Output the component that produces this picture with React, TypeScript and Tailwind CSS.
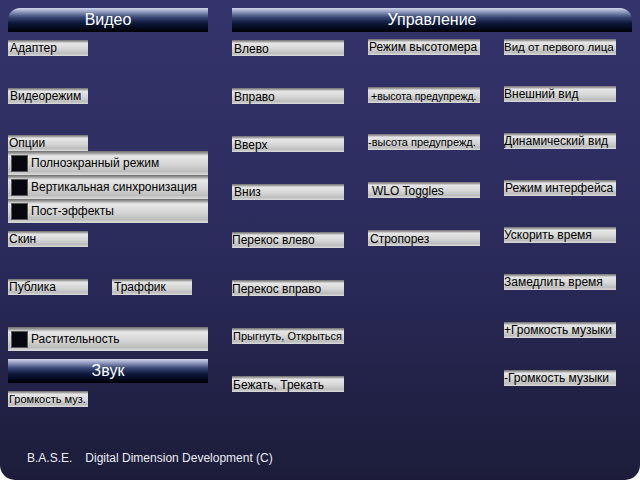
import React from "react";

type Key = {
  label: string;
  x?: string; // left padding class
  y?: string; // vertical offset class
  size?: string;
};

const font = { fontFamily: '"Liberation Sans", Arial, sans-serif' };

const btnBg =
  "bg-[linear-gradient(to_bottom,#6e6e6e_0%,#8c8c8c_6%,#e6e6e6_20%,#d6d6d6_55%,#bdbdbd_85%,#dcdcdc_100%)]";

const headerBg =
  "bg-[linear-gradient(to_bottom,#d0d6ea_0%,#9aa2c6_14%,#3a4876_38%,#0d1a3c_62%,#020616_88%,#000_100%)]";

function KeyButton({ label, x = "pl-[2px]", y = "pt-0", size = "text-[12px]", w = "w-[112px]" }: Key & { w?: string }) {
  return (
    <div className={`${w} h-4 ${btnBg} ${x} ${y} ${size} leading-4 text-black whitespace-nowrap overflow-hidden`}>
      {label}
    </div>
  );
}

function Header({ title, corner = "" }: { title: string; corner?: string }) {
  return (
    <div className={`h-6 ${headerBg} ${corner} flex items-center justify-center text-white text-[16px] leading-none`}>
      {title}
    </div>
  );
}

function CheckRow({ label }: { label: string }) {
  return (
    <div className={`h-6 flex items-center gap-[3px] pl-[3px] ${btnBg} text-[12px] text-black`}>
      <span className="w-[17px] h-[17px] bg-[#07070f] border border-[#5a5a5a]" />
      <span>{label}</span>
    </div>
  );
}

const col1: Key[] = [
  { label: "Влево", y: "pt-px" },
  { label: "Вправо", y: "pt-px" },
  { label: "Вверх", y: "pt-px" },
  { label: "Вниз", y: "pt-0" },
  { label: "Перекос влево", x: "pl-0", y: "pt-0" },
  { label: "Перекос вправо", x: "pl-0", y: "pt-px" },
  { label: "Прыгнуть, Открыться", x: "pl-[1px]", y: "pt-0", size: "text-[11px]" },
  { label: "Бежать, Трекать", x: "pl-[1px]", y: "pt-px" },
];

const col2: Key[] = [
  { label: "Режим высотомера", x: "pl-[1px]", y: "-mt-px" },
  { label: "+высота предупрежд.", x: "pl-[3px]", y: "pt-px", size: "text-[10.5px]" },
  { label: "-высота предупрежд.", x: "pl-0", y: "-mt-px", size: "text-[11px]" },
  { label: "WLO Toggles", x: "pl-[4px]", y: "pt-px" },
  { label: "Стропорез", x: "pl-[2px]", y: "pt-px" },
];

const col3: Key[] = [
  { label: "Вид от первого лица", x: "pl-0", y: "-mt-px", size: "text-[11.5px]" },
  { label: "Внешний вид", x: "pl-0", y: "-mt-px" },
  { label: "Динамический вид", x: "pl-0", y: "-mt-px" },
  { label: "Режим интерфейса", x: "pl-[1px]", y: "-mt-px" },
  { label: "Ускорить время", x: "pl-0", y: "-mt-px" },
  { label: "Замедлить время", x: "pl-0", y: "-mt-px" },
  { label: "+Громкость музыки", x: "pl-0", y: "pt-0" },
  { label: "-Громкость музыки", x: "pl-0", y: "pt-0" },
];

function KeyColumn({ keys }: { keys: Key[] }) {
  return (
    <div className="flex flex-col gap-8 w-[112px]">
      {keys.map((k) => (
        <KeyButton key={k.label} {...k} />
      ))}
    </div>
  );
}

export default function App() {
  return (
    <div className="w-[640px] h-[480px] bg-white" style={font}>
      <div className="h-full rounded-b-[15px] bg-[linear-gradient(to_bottom,#34346c_0%,#2a2a5a_55%,#1c1c3a_100%)] flex flex-col px-2 pt-2">
        <div className="flex gap-6">
          {/* Video + sound */}
          <div className="w-[200px] flex flex-col">
            <Header title="Видео" corner="rounded-tl-[12px]" />
            <div className="mt-2">
              <KeyButton label="Адаптер" w="w-20" y="pt-0" />
            </div>
            <div className="mt-8">
              <KeyButton label="Видеорежим" w="w-20" y="pt-0" />
            </div>
            <div className="mt-8">
              <KeyButton label="Опции" w="w-20" x="pl-[1px]" y="-mt-px" />
            </div>
            <CheckRow label="Полноэкранный режим" />
            <CheckRow label="Вертикальная синхронизация" />
            <CheckRow label="Пост-эффекты" />
            <div className="mt-2">
              <KeyButton label="Скин" w="w-20" x="pl-[1px]" y="pt-0" />
            </div>
            <div className="mt-8 flex gap-6">
              <KeyButton label="Публика" w="w-20" x="pl-[1px]" y="pt-0" />
              <KeyButton label="Траффик" w="w-20" y="pt-0" />
            </div>
            <div className="mt-8">
              <CheckRow label="Растительность" />
            </div>
            <div className="mt-2">
              <Header title="Звук" />
            </div>
            <div className="mt-2">
              <KeyButton label="Громкость муз." w="w-20" x="pl-[1px]" y="pt-0" size="text-[11px]" />
            </div>
          </div>

          {/* Controls */}
          <div className="w-[400px] flex flex-col">
            <Header title="Управление" corner="rounded-tr-[12px]" />
            <div className="mt-2 flex gap-6">
              <KeyColumn keys={col1} />
              <KeyColumn keys={col2} />
              <KeyColumn keys={col3} />
            </div>
          </div>
        </div>

        <div className="mt-auto mb-[15px] pl-[19px] flex gap-[13px] text-[12px] leading-[14px] text-[#ececf4]">
          <span>B.A.S.E.</span>
          <span>Digital Dimension Development (C)</span>
        </div>
      </div>
    </div>
  );
}
